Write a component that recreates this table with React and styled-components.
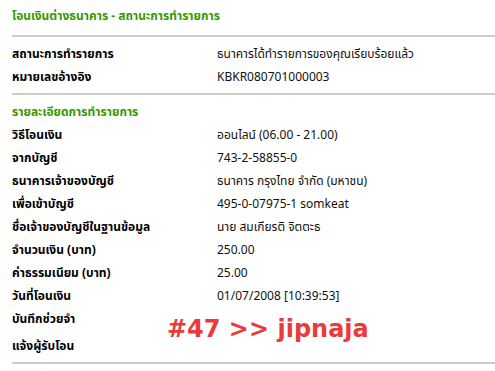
import styled, { createGlobalStyle } from "styled-components";

const Global = createGlobalStyle`
  body {
    margin: 0;
    background: #fff;
    font-family: Tahoma, "Noto Sans Thai", "Noto Sans", "DejaVu Sans", sans-serif;
  }
`;

const Page = styled.div`
  position: relative;
  padding: 6px 0 0 12px;
  width: 495px;
  height: 371px;
  box-sizing: border-box;
  overflow: hidden;
`;

const Title = styled.div`
  height: 20px;
  line-height: 20px;
  font-size: 12px;
  font-weight: bold;
  color: #339900;
  margin-bottom: 9px;
`;

const Divider = styled.div`
  height: 2px;
  background: #cccccc;
`;

const Section = styled.div`
  padding: ${(p) => p.top || 0}px 0 ${(p) => p.bottom || 0}px;
`;

const SubTitle = styled.div`
  height: 23px;
  line-height: 23px;
  font-size: 12px;
  font-weight: bold;
  color: #339900;
`;

const Row = styled.div`
  display: grid;
  grid-template-columns: 205px 1fr;
  height: 23px;
  line-height: 23px;
  margin-top: ${(p) => p.offset || 0}px;
`;

const Label = styled.div`
  font-size: 12px;
  font-weight: bold;
  color: #000;
  white-space: nowrap;
`;

const Value = styled.div`
  font-size: 12px;
  color: #111;
  white-space: nowrap;
`;

const Stamp = styled.div`
  position: absolute;
  left: 167px;
  top: 315px;
  font-family: "DejaVu Sans", sans-serif;
  font-weight: bold;
  font-size: 24px;
  color: #ea3a3a;
`;

const summary = [
  ["สถานะการทำรายการ", "ธนาคารได้ทำรายการของคุณเรียบร้อยแล้ว"],
  ["หมายเลขอ้างอิง", "KBKR080701000003"],
];

const details = [
  ["วิธีโอนเงิน", "ออนไลน์ (06.00 - 21.00)"],
  ["จากบัญชี", "743-2-58855-0"],
  ["ธนาคารเจ้าของบัญชี", "ธนาคาร กรุงไทย จำกัด (มหาชน)"],
  ["เพื่อเข้าบัญชี", "495-0-07975-1 somkeat"],
  ["ชื่อเจ้าของบัญชีในฐานข้อมูล", "นาย สมเกียรติ จิตตะธ"],
  ["จำนวนเงิน (บาท)", "250.00"],
  ["ค่าธรรมเนียม (บาท)", "25.00"],
  ["วันที่โอนเงิน", "01/07/2008 [10:39:53]"],
  ["บันทึกช่วยจำ", ""],
  ["แจ้งผู้รับโอน", ""],
];

export default function App() {
  return (
    <Page>
      <Global />
      <Title>โอนเงินต่างธนาคาร - สถานะการทำรายการ</Title>
      <Divider />
      <Section top={6} bottom={4}>
        {summary.map(([k, v]) => (
          <Row key={k}>
            <Label>{k}</Label>
            <Value>{v}</Value>
          </Row>
        ))}
      </Section>
      <Divider />
      <Section top={6} bottom={4}>
        <SubTitle>รายละเอียดการทำรายการ</SubTitle>
        {details.map(([k, v], i) => (
          <Row key={k} offset={i === details.length - 1 ? 4 : 0}>
            <Label>{k}</Label>
            <Value>{v}</Value>
          </Row>
        ))}
      </Section>
      <Divider />
      <Stamp>#47 &gt;&gt; jipnaja</Stamp>
    </Page>
  );
}
